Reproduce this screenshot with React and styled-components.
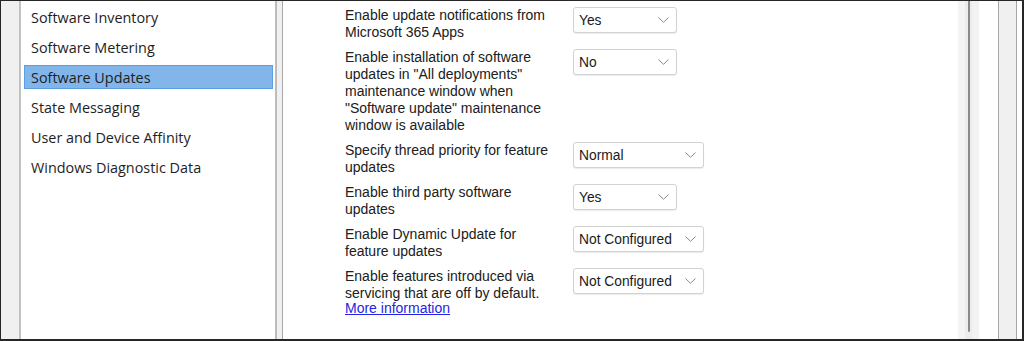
import React from "react";
import styled, { createGlobalStyle } from "styled-components";

const Global = createGlobalStyle`
  html, body { margin: 0; padding: 0; background: #ffffff; }
  #root { width: 1024px; height: 341px; }
`;

const Frame = styled.div`
  box-sizing: border-box;
  width: 1024px;
  height: 341px;
  border: 1px solid #262626;
  border-right-width: 2px;
  border-bottom-width: 2px;
  background: #f0f0f0;
  display: flex;
  overflow: hidden;
`;

const Gutter = styled.div`
  width: ${(p) => p.$w}px;
  flex: none;
  background: ${(p) => p.$bg || "#f0f0f0"};
`;

const ListPanel = styled.div`
  box-sizing: border-box;
  width: 258px;
  flex: none;
  background: #ffffff;
  border-left: 2px solid #c2c2c2;
  border-right: 2px solid #bcbcbc;
  padding: 4px 2px 0 3px;
  display: flex;
  flex-direction: column;
  gap: 6px;
`;

const ListItem = styled.div`
  box-sizing: border-box;
  height: 24px;
  display: flex;
  align-items: center;
  padding-left: 6px;
  font-family: "Open Sans", "Noto Sans", sans-serif;
  font-size: 14.4px;
  color: #1e1e1e;
  border: 1px solid ${(p) => (p.$selected ? "#5b9fe3" : "transparent")};
  background: ${(p) => (p.$selected ? "#82b6ea" : "transparent")};
`;

const ContentPanel = styled.div`
  box-sizing: border-box;
  width: 717px;
  flex: none;
  background: #ffffff;
  border-left: 1px solid #a8a8a8;
  border-right: 1px solid #a8a8a8;
  display: flex;
`;

const Form = styled.div`
  flex: 1;
  padding: 6px 0 0 62px;
  display: flex;
  flex-direction: column;
  gap: 8px;
`;

const Row = styled.div`
  display: flex;
  align-items: flex-start;
`;

const Label = styled.div`
  width: 212px;
  margin-right: 16px;
  font-family: "Liberation Sans", Arial, sans-serif;
  font-size: 14px;
  line-height: 17px;
  color: #202020;
`;

const Link = styled.a`
  display: block;
  margin-top: -2px;
  color: #2424e6;
  text-decoration: underline;
  cursor: pointer;
`;

const Select = styled.div`
  box-sizing: border-box;
  width: ${(p) => p.$w}px;
  height: 26px;
  flex: none;
  border: 1px solid #d2d2d2;
  border-radius: 3px;
  box-shadow: 0 1px 1px rgba(0, 0, 0, 0.08);
  background: #ffffff;
  display: flex;
  align-items: center;
  justify-content: space-between;
  padding: 0 7px 0 5px;
  font-family: "Liberation Sans", Arial, sans-serif;
  font-size: 13.8px;
  color: #1a1a1a;
`;

const Track = styled.div`
  width: 21px;
  flex: none;
  background: linear-gradient(to right, #f4f4f4 0 7px, #ececec 7px 14px, #f2f2f2 14px);
  display: flex;
  justify-content: center;
`;

const Thumb = styled.div`
  width: 2px;
  height: 331px;
  background: #8a8a8a;
  border-radius: 0 0 1px 1px;
`;

const Spacer = styled.div`
  width: 19px;
  flex: none;
`;

const Divider = styled.div`
  width: 1px;
  flex: none;
  background: #a6a6a6;
`;

const Chevron = () => (
  <svg width="11" height="6" viewBox="0 0 11 6">
    <path d="M0.5 0.5 L5.5 5.3 L10.5 0.5" fill="none" stroke="#8a8a8a" strokeWidth="1" />
  </svg>
);

const items = [
  "Software Inventory",
  "Software Metering",
  "Software Updates",
  "State Messaging",
  "User and Device Affinity",
  "Windows Diagnostic Data",
];

const rows = [
  { label: "Enable update notifications from Microsoft 365 Apps", value: "Yes", w: 104 },
  {
    label:
      'Enable installation of software updates in "All deployments" maintenance window when "Software update" maintenance window is available',
    value: "No",
    w: 104,
  },
  { label: "Specify thread priority for feature updates", value: "Normal", w: 131 },
  { label: "Enable third party software updates", value: "Yes", w: 104 },
  { label: "Enable Dynamic Update for feature updates", value: "Not Configured", w: 131 },
  {
    label: "Enable features introduced via servicing that are off by default.",
    value: "Not Configured",
    w: 131,
    link: true,
  },
];

export default function App() {
  return (
    <>
      <Global />
      <Frame>
        <Gutter $w={18} />
        <ListPanel>
          {items.map((t) => (
            <ListItem key={t} $selected={t === "Software Updates"}>
              {t}
            </ListItem>
          ))}
        </ListPanel>
        <Gutter $w={5} />
        <ContentPanel>
          <Form>
            {rows.map((r, i) => (
              <Row key={i}>
                <Label>
                  {r.label}
                  {r.link && <Link>More information</Link>}
                </Label>
                <Select $w={r.w}>
                  <span>{r.value}</span>
                  <Chevron />
                </Select>
              </Row>
            ))}
          </Form>
          <Track>
            <Thumb />
          </Track>
          <Spacer />
        </ContentPanel>
        <Gutter $w={17} />
        <Divider />
        <Gutter $w={5} $bg="#ffffff" />
      </Frame>
    </>
  );
}
